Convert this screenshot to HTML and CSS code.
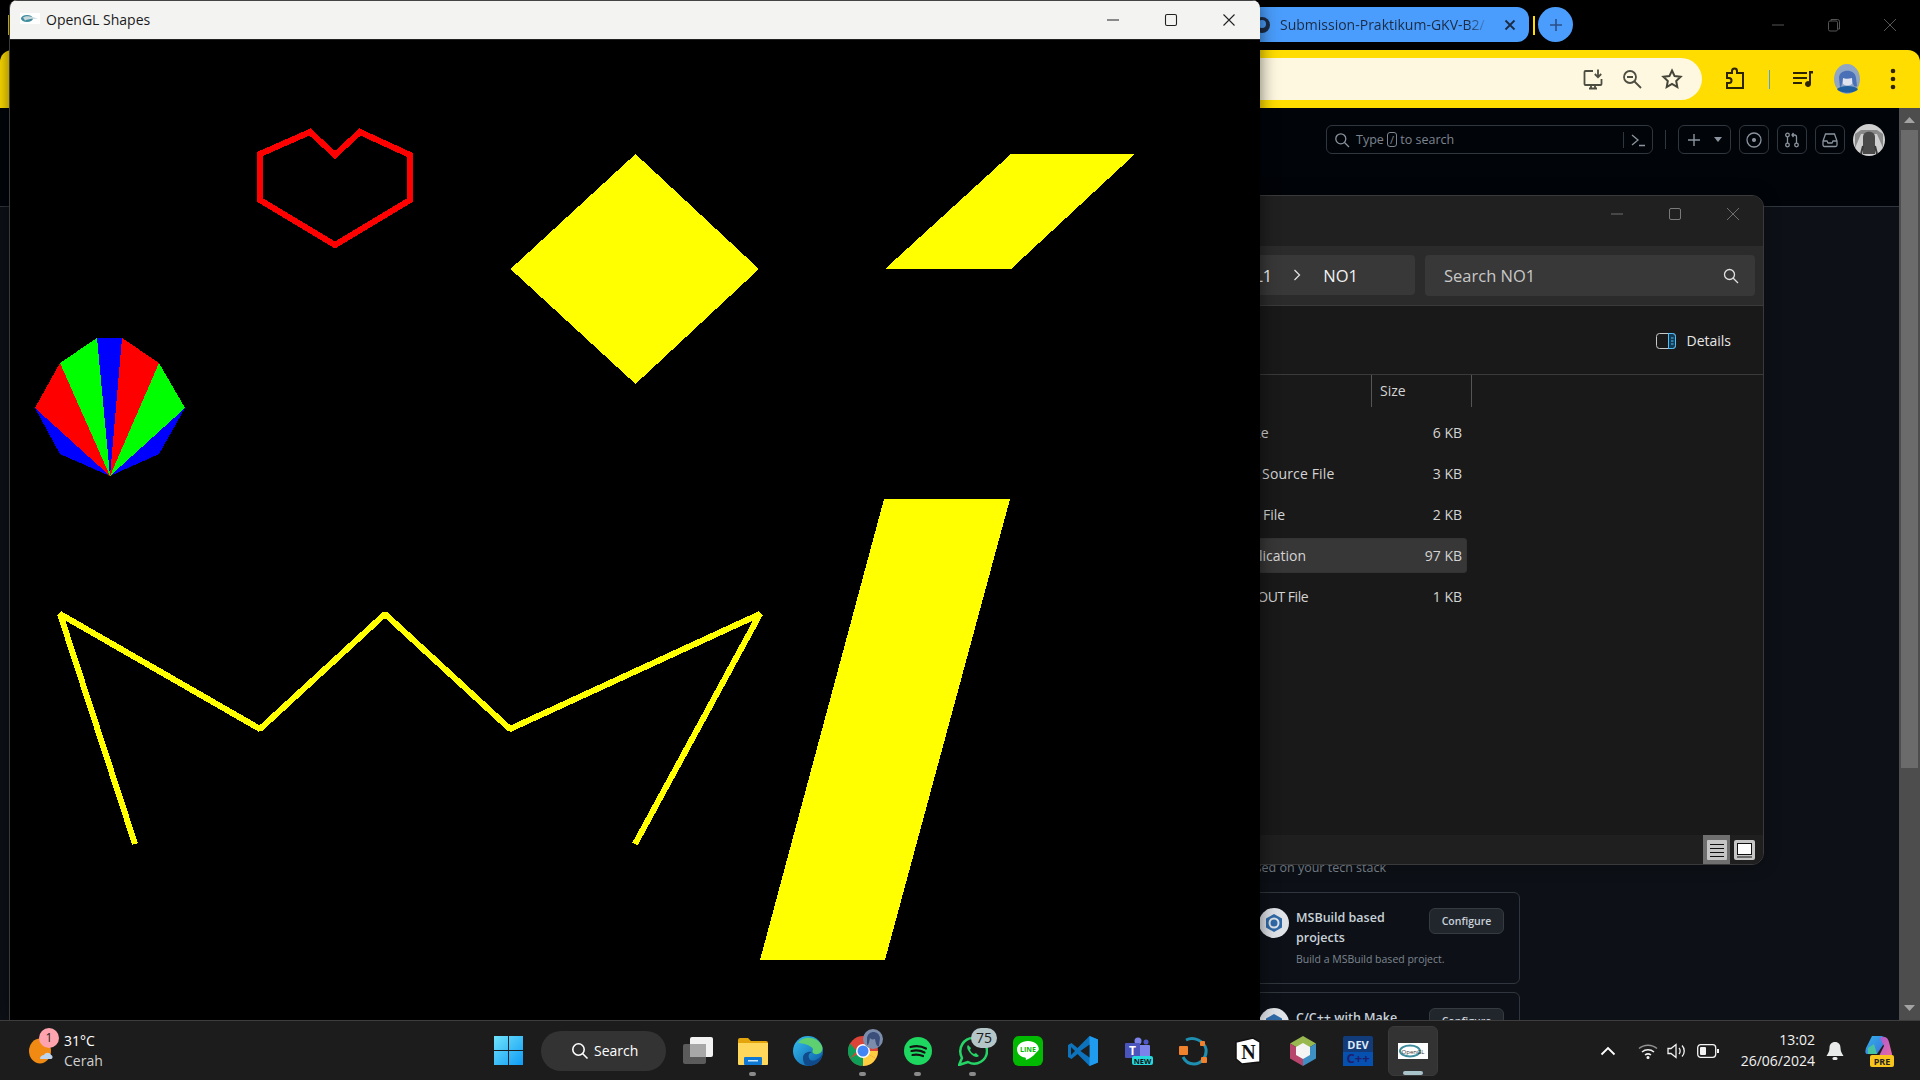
FILE: index.html
```html
<!DOCTYPE html>
<html lang="en">
<head>
    <meta charset="UTF-8">
    <title>OpenGL Shapes</title>
    <link rel="stylesheet" href="styles.css">
</head>
<body>
<div class="desktop">

    <!-- browser behind everything -->
    <div class="browser">
        <div class="tab-sep-left"></div>
        <div class="tabstrip">
            <div class="tab">
                <svg class="tab-icon" width="18" height="18" viewBox="0 0 18 18"><circle cx="9" cy="9" r="8" fill="#1c2b44"/><circle cx="9" cy="8" r="4" fill="#4a9dfc"/></svg>
                <span class="tab-title">Submission-Praktikum-GKV-B2/</span>
                <svg class="tab-close" width="12" height="12" viewBox="0 0 12 12"><path d="M1.5 1.5l9 9M10.5 1.5l-9 9" stroke="#1c2b44" stroke-width="1.8"/></svg>
            </div>
            <div class="tab-sep"></div>
            <div class="tab-new">
                <svg width="14" height="14" viewBox="0 0 14 14"><path d="M7 1v12M1 7h12" stroke="#2b4f86" stroke-width="1.6"/></svg>
            </div>
            <div class="caption-buttons">
                <div class="caption-btn"><svg width="14" height="14" viewBox="0 0 14 14"><path d="M1 7h12" stroke="#555" stroke-width="1"/></svg></div>
                <div class="caption-btn"><svg width="14" height="14" viewBox="0 0 14 14" fill="none" stroke="#555"><rect x="1.5" y="3" width="9" height="10" rx="1.5"/><path d="M4 3V1.5h6.5a2 2 0 0 1 2 2V11H11"/></svg></div>
                <div class="caption-btn"><svg width="14" height="14" viewBox="0 0 14 14"><path d="M1 1l12 12M13 1L1 13" stroke="#555"/></svg></div>
            </div>
        </div>

        <div class="toolbar">
            <div class="omnibox">
                <svg class="omni-install" width="24" height="24" viewBox="0 0 24 24" fill="none" stroke="#4d4d42" stroke-width="1.8"><path d="M11 4H3.5a1 1 0 0 0-1 1v12a1 1 0 0 0 1 1h15a1 1 0 0 0 1-1v-5"/><path d="M7 21.5h8M9 18v3M13 18v3"/><path d="M16 2.5V10M12.8 7l3.2 3.2L19.200 7"/></svg>
                <svg width="22" height="22" viewBox="0 0 22 22" fill="none" stroke="#4d4d42" stroke-width="1.8"><circle cx="9" cy="9" r="6"/><path d="M13.500 13.500L20 20M6 9h6"/></svg>
                <svg width="22" height="22" viewBox="0 0 22 22" fill="none" stroke="#45453a" stroke-width="2"><path d="M11 2.500l2.600 5.600 6 .7-4.400 4.200 1.100 6L11 16l-5.300 3 1.100-6-4.400-4.200 6-.7z"/></svg>
            </div>
            <svg class="tb-ext" width="24" height="24" viewBox="0 0 24 24" fill="none" stroke="#2d2400" stroke-width="2"><path d="M4 6h5V4a2.500 2.500 0 0 1 5 0v2h6v15H4v-5h2a2.500 2.500 0 0 0 0-5H4z"/></svg>
            <div class="tb-sep"></div>
            <svg class="tb-queue" width="24" height="24" viewBox="0 0 24 24" fill="#2d2400"><path d="M2 5h14v2H2zM2 10h14v2H2zM2 15h9v2H2z"/><path d="M18 4h4v2.500h-2V17a3 3 0 1 1-2-2.800z"/></svg>
            <svg class="tb-avatar" width="26" height="30" viewBox="0 0 26 30"><ellipse cx="13" cy="15" rx="13" ry="15" fill="#8fa6c4"/><path d="M9 12h9v8c-3 2-6 2-9 0z" fill="#dfe3ee"/><path d="M5 14c0-9 16-10 17 0l1 8c-3 2-4-1-5-8-3 1-7 1-9 0-1 4-1 9-3 9z" fill="#4a70b8"/><path d="M3 25c4-4 17-4 21 0-3 5-18 5-21 0z" fill="#1f5fa0"/></svg>
            <svg class="tb-kebab" width="16" height="24" viewBox="0 0 16 24" fill="#2d2400"><circle cx="8" cy="4" r="2.300"/><circle cx="8" cy="12" r="2.300"/><circle cx="8" cy="20" r="2.300"/></svg>
        </div>

        <div class="gh-page">
            <div class="gh-header">
                <div class="gh-search">
                    <svg width="16" height="16" viewBox="0 0 16 16" fill="none" stroke="#8b949e" stroke-width="1.300"><circle cx="6.800" cy="6.800" r="5"/><path d="M10.500 10.500L15 15"/></svg>
                    <span class="gh-search-text">Type <kbd class="gh-key">/</kbd> to search</span>
                    <span class="gh-search-sep"></span>
                    <svg width="16" height="16" viewBox="0 0 16 16" fill="none" stroke="#8b949e" stroke-width="1.300"><path d="M2 3l6 5-6 5M9 13.500h6"/></svg>
                </div>
                <div class="gh-sep"></div>
                <div class="gh-btn gh-btn-wide">
                    <svg width="14" height="14" viewBox="0 0 14 14"><path d="M7 1v12M1 7h12" stroke="#8b949e" stroke-width="1.400"/></svg>
                    <svg width="8" height="5" viewBox="0 0 8 5"><path d="M0 0h8L4 5z" fill="#8b949e"/></svg>
                </div>
                <div class="gh-btn"><svg width="16" height="16" viewBox="0 0 16 16" fill="none" stroke="#8b949e" stroke-width="1.300"><circle cx="8" cy="8" r="7"/><circle cx="8" cy="8" r="1.400" fill="#8b949e"/></svg></div>
                <div class="gh-btn"><svg width="16" height="16" viewBox="0 0 16 16" fill="none" stroke="#8b949e" stroke-width="1.300"><circle cx="3.500" cy="3" r="1.800"/><circle cx="3.500" cy="13" r="1.800"/><circle cx="12.500" cy="13" r="1.800"/><path d="M3.500 5v6M12.500 11V5a2 2 0 0 0-2-2H8M9.500 1L8 3l1.500 2"/></svg></div>
                <div class="gh-btn"><svg width="16" height="16" viewBox="0 0 16 16" fill="none" stroke="#8b949e" stroke-width="1.300"><path d="M3.500 2h9l2.500 7v4a1.500 1.500 0 0 1-1.500 1.500h-11A1.500 1.500 0 0 1 1 13V9z"/><path d="M1 9h4l1 2h4l1-2h4"/></svg></div>
                <svg class="gh-avatar" width="32" height="32" viewBox="0 0 32 32"><circle cx="16" cy="16" r="16" fill="#cfcfcf"/><path d="M2 10l6-4 16 0 6 4v14l-6-14H8L2 24z" fill="#8a8a8a"/><path d="M10 30V13c0-7 12-7 12 0v17z" fill="#4a4a4a"/><path d="M8 30l2-8M24 30l-2-8" stroke="#3a3a3a" stroke-width="2"/></svg>
            </div>

            <div class="gh-main">
                <div class="gh-hint">based on your tech stack</div>
                <div class="gh-card">
                    <svg class="gh-card-icon" width="30" height="30" viewBox="0 0 30 30"><circle cx="15" cy="15" r="15" fill="#dfe3e8"/><path d="M15 6l8 4.500v9L15 24l-8-4.500v-9z" fill="#2f6aa8"/><circle cx="15" cy="15" r="4.500" fill="none" stroke="#dfe3e8" stroke-width="2"/></svg>
                    <div class="gh-card-body">
                        <div class="gh-card-title">MSBuild based projects</div>
                        <div class="gh-card-desc">Build a MSBuild based project.</div>
                    </div>
                    <div class="gh-configure">Configure</div>
                </div>
                <div class="gh-card">
                    <svg class="gh-card-icon" width="30" height="30" viewBox="0 0 30 30"><circle cx="15" cy="15" r="15" fill="#dfe3e8"/><path d="M15 6l8 4.500v9L15 24l-8-4.500v-9z" fill="#2f6aa8"/></svg>
                    <div class="gh-card-body">
                        <div class="gh-card-title">C/C++ with Make</div>
                    </div>
                    <div class="gh-configure">Configure</div>
                </div>
            </div>
        </div>

        <div class="scrollbar">
            <svg width="21" height="22" viewBox="0 0 21 22"><path d="M5 15l5.500-6 5.500 6z" fill="#a3a3a3"/></svg>
            <div class="scroll-thumb"></div>
            <svg class="scroll-down" width="21" height="22" viewBox="0 0 21 22"><path d="M5 7l5.500 6L16 7z" fill="#a3a3a3"/></svg>
        </div>
    </div>

    <!-- file explorer window -->
    <div class="explorer">
        <div class="ex-title">
            <div class="ex-cap"><svg width="14" height="14" viewBox="0 0 14 14"><path d="M1 7h12" stroke="#6e6e6e"/></svg></div>
            <div class="ex-cap"><svg width="14" height="14" viewBox="0 0 14 14"><rect x="1.500" y="1.500" width="11" height="11" rx="1.500" fill="none" stroke="#7a7a7a"/></svg></div>
            <div class="ex-cap"><svg width="14" height="14" viewBox="0 0 14 14"><path d="M1 1l12 12M13 1L1 13" stroke="#6e6e6e"/></svg></div>
        </div>
        <div class="ex-nav">
            <div class="ex-address">
                <span class="ex-crumb">SOAL1</span>
                <svg class="ex-chevron" width="8" height="12" viewBox="0 0 8 12"><path d="M1.500 1l5 5-5 5" fill="none" stroke="#e0e0e0" stroke-width="1.300"/></svg>
                <span class="ex-crumb ex-crumb-last">NO1</span>
            </div>
            <div class="ex-search">
                <span>Search NO1</span>
                <svg width="16" height="16" viewBox="0 0 16 16" fill="none" stroke="#e0e0e0" stroke-width="1.300"><circle cx="6.500" cy="6.500" r="5"/><path d="M10 10l5 5"/></svg>
            </div>
        </div>
        <div class="ex-command">
            <svg width="20" height="16" viewBox="0 0 20 16"><rect x=".5" y=".5" width="19" height="15" rx="3" fill="none" stroke="#c9c9c9"/><path d="M12.500.5H16.500a3 3 0 0 1 3 3v9a3 3 0 0 1-3 3h-4z" fill="#163a52" stroke="#4cc2ff"/><path d="M15 5h2.500M15 8h2.500M15 11h2.500" stroke="#4cc2ff"/></svg>
            <span>Details</span>
        </div>
        <div class="ex-columns"><div class="ex-col-size">Size</div></div>
        <div class="ex-row"><span class="ex-type">Make</span><span class="ex-size">6 KB</span></div>
        <div class="ex-row"><span class="ex-type ex-type-wide">C++ Source File</span><span class="ex-size">3 KB</span></div>
        <div class="ex-row"><span class="ex-type">DEV File</span><span class="ex-size">2 KB</span></div>
        <div class="ex-row ex-row-selected"><span class="ex-type">Application</span><span class="ex-size">97 KB</span></div>
        <div class="ex-row"><span class="ex-type ex-type-tight">STDOUT File</span><span class="ex-size">1 KB</span></div>
        <div class="ex-status">
            <div class="ex-view ex-view-active"><svg width="20" height="20" viewBox="0 0 20 20"><rect width="20" height="20" rx="1" fill="#c6c6c6"/><path d="M3 4.500h14M3 8.500h14M3 12.500h14M3 16.500h14" stroke="#111"/></svg></div>
            <div class="ex-view"><svg width="21" height="20" viewBox="0 0 21 20"><rect width="21" height="20" rx="2" fill="#c6c6c6"/><rect x="3.500" y="3.500" width="14" height="11" fill="#fff" stroke="#111"/><path d="M3 17h15" stroke="#111"/></svg></div>
        </div>
    </div>

    <!-- the glut window -->
    <div class="gl-window">
        <div class="gl-title">
            <svg class="gl-logo" width="20" height="11" viewBox="0 0 20 11"><rect width="20" height="11" fill="#fff"/><ellipse cx="7" cy="5.500" rx="6" ry="3.500" fill="#3f8c9e"/><path d="M3 4.500c3-2 8-2 15 1.500-5-.5-10 0-13 1.500z" fill="#c9d8dc"/></svg>
            <span class="gl-name">OpenGL Shapes</span>
            <div class="gl-caps">
                <div class="gl-cap"><svg width="14" height="14" viewBox="0 0 14 14"><path d="M1 7h12" stroke="#222" stroke-width="1.100"/></svg></div>
                <div class="gl-cap"><svg width="14" height="14" viewBox="0 0 14 14"><rect x="1.500" y="1.500" width="11" height="11" rx="1.500" fill="none" stroke="#222" stroke-width="1.100"/></svg></div>
                <div class="gl-cap"><svg width="14" height="14" viewBox="0 0 14 14"><path d="M1.500 1.500l11 11M12.500 1.500l-11 11" stroke="#222" stroke-width="1.100"/></svg></div>
            </div>
        </div>
        <svg class="gl-canvas" width="1250" height="981" viewBox="10 39 1250 981" shape-rendering="crispEdges">
            <polygon points="260,153 310,131 335,154 360,131 410,154 410,199 335,244 260,199" fill="none" stroke="#f00" stroke-width="6" stroke-linejoin="miter"/>
            <polygon points="635.500,153 759,268 635.500,383 510.500,268" fill="#ff0"/>
            <polygon points="1011,153 1135,153 1011,268 885,268" fill="#ff0"/>
            <polygon points="884,498 1010,498 885,959 760,959" fill="#ff0"/>
            <polyline points="135,843 60,613 260,728 385,613 510,728 760,613 635,843" fill="none" stroke="#ff0" stroke-width="6" stroke-linejoin="bevel"/>
            <polygon points="110,475 60,453 35,407" fill="#00f"/>
            <polygon points="110,475 35,407 60,362" fill="#f00"/>
            <polygon points="110,475 60,362 97,337" fill="#0f0"/>
            <polygon points="110,475 97,337 122,337" fill="#00f"/>
            <polygon points="110,475 122,337 159,362" fill="#f00"/>
            <polygon points="110,475 159,362 185,407" fill="#0f0"/>
            <polygon points="110,475 185,407 159,453" fill="#00f"/>
        </svg>
    </div>

    <!-- taskbar -->
    <div class="taskbar">
        <div class="weather">
            <div class="weather-icon">
                <svg width="24" height="26" viewBox="0 0 24 26"><ellipse cx="11" cy="13" rx="11" ry="12.500" fill="#f08a12"/><path d="M11 21c0-3 2-4 4-4 1-3 6-3 7 0 2 0 2 4 0 4z" fill="#bcd4ee"/></svg>
                <span class="weather-badge">1</span>
            </div>
            <div class="weather-text">
                <div class="weather-temp">31°C</div>
                <div class="weather-desc">Cerah</div>
            </div>
        </div>

        <div class="slot slot-start">
            <svg width="29" height="29" viewBox="0 0 30 30"><defs><linearGradient id="win" x1="0" y1="0" x2="1" y2="1"><stop offset="0" stop-color="#6fe3fb"/><stop offset="1" stop-color="#0f9bf5"/></linearGradient></defs><path d="M0 0h14.500v14.500H0zM15.500 0H30v14.500H15.500zM0 15.500h14.500V30H0zM15.500 15.500H30V30H15.500z" fill="url(#win)"/></svg>
        </div>
        <div class="task-search">
            <svg width="18" height="18" viewBox="0 0 18 18" fill="none" stroke="#fff" stroke-width="1.600"><circle cx="7.500" cy="7.500" r="5.700"/><path d="M11.500 11.500l5 5"/></svg>
            <span>Search</span>
        </div>

        <div class="slots">
            <div class="slot"><svg width="30" height="30" viewBox="0 0 30 30"><rect x="0" y="8" width="23" height="20" rx="2" fill="#5b5b5b"/><rect x="7" y="1" width="23" height="20" rx="2" fill="#f2f2f2"/><rect x="7" y="8" width="16" height="13" fill="#a8a8a8"/></svg></div>

            <div class="slot slot-open"><svg width="30" height="28" viewBox="0 0 30 28"><path d="M0 3a2 2 0 0 1 2-2h8l3 3h15a2 2 0 0 1 2 2v4H0z" fill="#e3a40c"/><path d="M0 6h30v21a1 1 0 0 1-1 1H1a1 1 0 0 1-1-1z" fill="#ffd75a"/><rect x="6" y="20" width="18" height="8" rx="1" fill="#0f78d4"/><rect x="10" y="23" width="10" height="1.500" fill="#c8e6fb"/></svg></div>

            <div class="slot"><svg width="30" height="30" viewBox="0 0 30 30"><defs><linearGradient id="edge" x1="0" y1="0" x2="1" y2="1"><stop offset="0" stop-color="#35c1f1"/><stop offset="1" stop-color="#0c59a4"/></linearGradient></defs><circle cx="15" cy="15" r="15" fill="url(#edge)"/><path d="M5 7c5-8 20-7 24 3 2 6-3 9-7 8-4-1-2-4-2-5-2-4-11-6-15-6z" fill="#5fd06f"/><path d="M30 17c-1 8-7 13-14 13-5 0-6-5-6-8 0-5 5-7 9-6-3 1-4 3-3 6 1 4 9 4 14-5z" fill="#114a8b"/></svg></div>

            <div class="slot slot-open">
                <svg width="30" height="30" viewBox="0 0 30 30"><circle cx="15" cy="15" r="15" fill="#db4437"/><path d="M15 15L2 22.500A15 15 0 0 0 15 30z" fill="#0f9d58"/><path d="M2 22.500A15 15 0 0 1 2 7.500L9 15z" fill="#0f9d58"/><path d="M15 15l13 7.500A15 15 0 0 1 15 30z" fill="#ffcd40"/><path d="M15 15H30a15 15 0 0 1-2 7.500z" fill="#ffcd40"/><circle cx="15" cy="15" r="7" fill="#fff"/><circle cx="15" cy="15" r="5.500" fill="#4285f4"/></svg>
                <svg class="app-badge-pic" width="20" height="20" viewBox="0 0 20 20"><circle cx="10" cy="10" r="10" fill="#7c8dac"/><path d="M4 9c1-8 12-8 13 0l-1 8c-2 1-3-1-4-7-3 1-4 0-5-1-1 4-1 7-3 7z" fill="#3b4f7a"/></svg>
            </div>

            <div class="slot slot-open"><svg width="28" height="28" viewBox="0 0 28 28"><circle cx="14" cy="14" r="14" fill="#1ed760"/><path d="M6.500 10c5-1.500 11-1 15.500 1.500M7.500 14c4.500-1 9-.6 13 1.500M8.500 18c3.500-.8 7-.5 10.500 1" fill="none" stroke="#121212" stroke-width="2.200" stroke-linecap="round"/></svg></div>

            <div class="slot slot-open">
                <svg width="30" height="30" viewBox="0 0 30 30"><path d="M4 22C-1 12 6 2 15 2c8 0 14 6 14 13 0 9-10 16-19 11L1 29z" fill="none" stroke="#25d366" stroke-width="2.500" stroke-linejoin="round"/><path d="M10 9c-2 2 0 6 3 9s6 4 8 2l-3-3-2 1c-2-1-3-2-4-4l1-2z" fill="#25d366"/></svg>
                <span class="app-badge">75</span>
            </div>

            <div class="slot"><svg width="30" height="30" viewBox="0 0 30 30"><rect width="30" height="30" rx="6" fill="#00b900"/><path d="M15 5C8.500 5 4 9 4 13.500c0 4.500 4 7.500 8 8 1 .2 1 1 .8 2.500 3-1 8-4 10-7 2-2 3-3 3-3.500C26 9 21.500 5 15 5z" fill="#fff"/><text x="15" y="16" class="ico-line">LINE</text></svg></div>

            <div class="slot"><svg width="30" height="30" viewBox="0 0 30 30"><path d="M21.500 0L9.500 12 3.500 7 0 9v12l3.500 2 6-5 12 12 8.500-3.500V3.500z" fill="#0d73bd"/><path d="M21.500 0L30 3.500v23L21.500 30z" fill="#1f9cf0"/><path d="M21.500 8.500L12.500 15l9 6.500z" fill="#1e1e1e"/><path d="M3 11l4 4-4 4z" fill="#1e1e1e"/></svg></div>

            <div class="slot"><svg width="30" height="30" viewBox="0 0 30 30"><circle cx="15" cy="5" r="3.500" fill="#7b83eb"/><circle cx="23" cy="6" r="2.500" fill="#5059c9"/><rect x="12" y="9" width="15" height="13" rx="1" fill="#7b83eb"/><rect x="2" y="7" width="15" height="15" rx="1" fill="#4b53bc"/><text x="9.500" y="19" class="ico-teams">T</text><rect x="9" y="20" width="21" height="9" rx="2" fill="#24d8dc"/><text x="19.500" y="27.500" class="ico-new">NEW</text></svg></div>

            <div class="slot"><svg width="30" height="30" viewBox="0 0 30 30"><path d="M8 4c8-4 18 1 20 9 1 8-5 15-12 15-5 0-9-3-11-7" fill="none" stroke="#1e8fb0" stroke-width="3"/><rect x="1" y="10" width="9" height="9" rx="1" fill="#f0822d"/><rect x="22" y="5" width="5" height="5" rx="1" fill="#f0822d"/><rect x="23" y="21" width="6" height="6" rx="1" fill="#f0822d"/></svg></div>

            <div class="slot"><svg width="26" height="28" viewBox="0 0 26 28"><path d="M1 5l17-4 7 4v20L7 27l-6-5z" fill="#fff" stroke="#111" stroke-width="1.500"/><text x="13.500" y="21.500" class="ico-notion">N</text></svg></div>

            <div class="slot"><svg width="28" height="30" viewBox="0 0 28 30"><path d="M14 0l13 7.500L14 15 1 7.500z" fill="#9ab850"/><path d="M1 7.500L14 15v15L1 22.500z" fill="#b8456b"/><path d="M27 7.500L14 15v15l13-7.500z" fill="#3d8fc4"/><path d="M14 7l7 4v8l-7 4-7-4v-8z" fill="#f4f4f4"/></svg></div>

            <div class="slot"><svg width="30" height="30" viewBox="0 0 30 30"><rect width="30" height="30" rx="2" fill="#123b7a"/><rect y="16" width="30" height="14" fill="#0650b0"/><text x="15" y="13" class="ico-dev">DEV</text><text x="15" y="27" class="ico-cpp">C++</text></svg></div>

            <div class="slot slot-active"><svg width="30" height="16" viewBox="0 0 30 16"><rect width="30" height="16" fill="#fff"/><ellipse cx="12" cy="8" rx="10" ry="5.500" fill="none" stroke="#3f8c9e" stroke-width="2"/><text x="15" y="11" class="ico-gl">OpenGL</text></svg></div>
        </div>

        <div class="tray">
            <div class="tray-icon"><svg width="16" height="10" viewBox="0 0 16 10"><path d="M1.500 8.500L8 2l6.500 6.500" fill="none" stroke="#fff" stroke-width="1.800"/></svg></div>
            <div class="tray-icon tray-wifi"><svg width="20" height="16" viewBox="0 0 20 16" fill="none" stroke="#f2f2f2" stroke-width="1.500"><path d="M1 5.500c5-4.500 13-4.500 18 0" opacity=".55"/><path d="M4 9c3.500-3 8.500-3 12 0"/><path d="M7 12c2-1.500 4-1.500 6 0"/><circle cx="10" cy="14.500" r=".8" fill="#f2f2f2"/></svg></div>
            <div class="tray-icon"><svg width="20" height="18" viewBox="0 0 20 18" fill="none" stroke="#f2f2f2" stroke-width="1.300"><path d="M1 6.500h3l5-4v13l-5-4H1z"/><path d="M12 6c1.500 1.500 1.500 4.500 0 6M15 3.500c3 3 3 8 0 11"/></svg></div>
            <div class="tray-icon tray-batt"><svg width="22" height="14" viewBox="0 0 22 14"><rect x=".7" y=".7" width="18" height="12.600" rx="3" fill="none" stroke="#f2f2f2" stroke-width="1.300"/><rect x="3" y="3" width="6" height="8" rx="1" fill="#f2f2f2"/><rect x="20" y="5" width="2" height="4" fill="#f2f2f2"/></svg></div>
            <div class="clock">
                <div>13:02</div>
                <div>26/06/2024</div>
            </div>
            <div class="tray-bell"><svg width="18" height="20" viewBox="0 0 18 20"><path d="M9 1c-3.500 0-5.500 2.500-5.500 6 0 4-2 6-3 8h17c-1-2-3-4-3-8 0-3.500-2-6-5.500-6z" fill="#e8ebe9"/><rect x="6.500" y="16" width="5" height="3" rx="1.500" fill="#e8ebe9"/></svg></div>
            <div class="tray-copilot"><svg width="30" height="34" viewBox="0 0 30 34"><defs><linearGradient id="cop1" x1="0" y1="0" x2="1" y2="1"><stop offset="0" stop-color="#2fb3e8"/><stop offset="1" stop-color="#3d6ee0"/></linearGradient><linearGradient id="cop2" x1="0" y1="0" x2="1" y2="1"><stop offset="0" stop-color="#a55ad6"/><stop offset="1" stop-color="#f06aa0"/></linearGradient></defs><path d="M8 2h9c3 0 3 2 4 6l-8 12H4C1 20 1 18 2 14z" fill="url(#cop1)"/><path d="M16 4c5-3 8 0 9 4l3 12c0 3-3 4-6 4H14l6-12z" fill="url(#cop2)"/><path d="M4 14l6-4 3 10H4z" fill="#49c2a0"/><rect x="6" y="21" width="24" height="12" rx="2" fill="#f7c51e"/><text x="18" y="31" class="ico-pre">PRE</text></svg></div>
        </div>
    </div>
</div>
</body>
</html>
```

FILE: styles.css
```css
* {
    box-sizing: border-box;
}
html, body {
    margin: 0;
    padding: 0;
}
body {
    font-family: "Open Sans", "Noto Sans", sans-serif;
    background: #000;
    overflow: hidden;
}
svg {
    display: block;
    flex-shrink: 0;
}
.desktop {
    position: relative;
    width: 1920px;
    height: 1080px;
    overflow: hidden;
}

/* browser */
.browser {
    position: absolute;
    left: 0;
    top: 0;
    width: 1920px;
    height: 1020px;
    background: #000;
    display: flex;
    flex-direction: column;
}
.tab-sep-left {
    position: absolute;
    left: 8px;
    top: 15px;
    width: 2px;
    height: 20px;
    background: #ffdd00;
}
.tabstrip {
    height: 50px;
    padding-left: 1240px;
    display: flex;
    align-items: flex-start;
}
.tab {
    width: 289px;
    height: 35px;
    margin-top: 7px;
    padding: 0 13px 0 13px;
    background: #4a9dfc;
    border-radius: 12px;
    display: flex;
    align-items: center;
    color: #1c2b44;
    font-size: 14px;
}
.tab-title {
    margin-left: 9px;
    width: 210px;
    overflow: hidden;
    white-space: nowrap;
    -webkit-mask-image: linear-gradient(90deg, #000 90%, transparent);
    mask-image: linear-gradient(90deg, #000 90%, transparent);
}
.tab-close {
    margin-left: 15px;
}
.tab-sep {
    width: 2px;
    height: 19px;
    margin: 16px 3px 0 4px;
    background: #ffdd00;
}
.tab-new {
    width: 35px;
    height: 35px;
    margin-top: 7px;
    border-radius: 50%;
    background: #4a9dfc;
    display: flex;
    align-items: center;
    justify-content: center;
}
.caption-buttons {
    margin-left: auto;
    margin-right: 2px;
    margin-top: 7px;
    display: flex;
}
.caption-btn {
    width: 56px;
    height: 36px;
    display: flex;
    align-items: center;
    justify-content: center;
}

.toolbar {
    height: 58px;
    background: #ffdd00;
    border-radius: 12px 12px 0 0;
    display: flex;
    align-items: center;
}
.omnibox {
    width: 1622px;
    height: 42px;
    margin-left: 80px;
    padding-right: 19px;
    background: #fef8e0;
    border-radius: 21px;
    display: flex;
    align-items: center;
    justify-content: flex-end;
    gap: 18px;
}
.omni-install {
    margin-right: -3px;
}
.tb-ext {
    margin-left: 21px;
}
.tb-sep {
    width: 1px;
    height: 19px;
    margin-left: 22px;
    background: #4a9dfc;
}
.tb-queue {
    margin-left: 21px;
}
.tb-avatar {
    margin-left: 19px;
}
.tb-kebab {
    margin-left: 25px;
}

.gh-page {
    flex: 1;
    background: #0d1117;
    margin-right: 21px;
    overflow: hidden;
}
.gh-header {
    height: 99px;
    padding: 17px 14px 0 0;
    background: #010409;
    border-bottom: 1px solid #30363d;
    display: flex;
    justify-content: flex-end;
    align-items: flex-start;
    gap: 8px;
}
.gh-search {
    width: 327px;
    height: 29px;
    padding: 0 6px 0 7px;
    border: 1px solid #30363d;
    border-radius: 6px;
    display: flex;
    align-items: center;
    color: #7d8590;
    font-size: 12.500px;
}
.gh-search-text {
    margin-left: 6px;
    flex: 1;
}
.gh-key {
    display: inline-block;
    width: 10px;
    height: 15px;
    border: 1px solid #7d8590;
    border-radius: 3px;
    font-family: inherit;
    font-size: 11px;
    line-height: 13px;
    text-align: center;
}
.gh-search-sep {
    width: 1px;
    height: 16px;
    margin-right: 6px;
    background: #30363d;
}
.gh-sep {
    width: 1px;
    height: 19px;
    margin: 5px 4px 0 4px;
    background: #30363d;
}
.gh-btn {
    width: 30px;
    height: 29px;
    border: 1px solid #30363d;
    border-radius: 6px;
    display: flex;
    align-items: center;
    justify-content: center;
}
.gh-btn-wide {
    width: 53px;
    gap: 13px;
}
.gh-avatar {
    margin-top: -1px;
}
.gh-main {
    width: 278px;
    margin-left: 1242px;
    padding-top: 651px;
}
.gh-hint {
    width: 144px;
    height: 34px;
    display: flex;
    justify-content: flex-end;
    white-space: nowrap;
    color: #7d8590;
    font-size: 12.500px;
    line-height: 19px;
}
.gh-card {
    height: 92px;
    margin-bottom: 8px;
    padding: 16px 15px 16px 16px;
    border: 1px solid #30363d;
    border-radius: 6px;
    display: flex;
    align-items: flex-start;
}
.gh-card-icon {
    margin: -1px 7px 0 0;
}
.gh-card-body {
    width: 125px;
}
.gh-card-title {
    margin-top: -1px;
    color: #c9d1d9;
    font-size: 12.500px;
    font-weight: 600;
    line-height: 20px;
    white-space: normal;
}
.gh-card-desc {
    margin-top: 3px;
    width: 170px;
    color: #7d8590;
    font-size: 10.500px;
    line-height: 16px;
    white-space: nowrap;
}
.gh-configure {
    width: 75px;
    height: 26px;
    margin-left: auto;
    margin-top: -1px;
    background: #21262d;
    border: 1px solid #363b42;
    border-radius: 6px;
    color: #c9d1d9;
    font-size: 10.500px;
    font-weight: 600;
    line-height: 24px;
    text-align: center;
}

.scrollbar {
    position: absolute;
    left: 1899px;
    top: 108px;
    width: 21px;
    height: 912px;
    background: #4d4d4d;
    display: flex;
    flex-direction: column;
}
.scroll-thumb {
    width: 17px;
    height: 638px;
    margin-left: 2px;
    background: #6b6b6b;
}
.scroll-down {
    margin-top: auto;
}

/* explorer */
.explorer {
    position: absolute;
    left: 1100px;
    top: 195px;
    width: 664px;
    height: 670px;
    background: #191919;
    border: 1px solid #3a3a3a;
    border-radius: 8px 12px 12px 8px;
    box-shadow: 0 0 16px rgba(0, 0, 0, 0.35);
    display: flex;
    flex-direction: column;
    color: #e6e6e6;
    font-size: 14px;
    overflow: hidden;
}
.ex-title {
    height: 50px;
    padding-right: 1px;
    background: #202020;
    display: flex;
    justify-content: flex-end;
}
.ex-cap {
    width: 58px;
    height: 36px;
    display: flex;
    align-items: center;
    justify-content: center;
}
.ex-nav {
    height: 60px;
    padding: 9px 8px 9px 0;
    background: #2b2b2b;
    border-bottom: 1px solid #3a3a3a;
    display: flex;
    gap: 10px;
}
.ex-address {
    flex: 1;
    height: 40px;
    padding-right: 57px;
    background: #383838;
    border-radius: 4px;
    display: flex;
    align-items: center;
    justify-content: flex-end;
    font-size: 16.500px;
}
.ex-crumb {
    color: #f2f2f2;
}
.ex-chevron {
    margin: 0 22px 0 21px;
}
.ex-search {
    width: 330px;
    height: 41px;
    padding: 0 16px 0 19px;
    background: #383838;
    border-radius: 4px;
    display: flex;
    align-items: center;
    justify-content: space-between;
    color: #c8c8c8;
    font-size: 16.500px;
}
.ex-command {
    height: 68px;
    padding: 1px 32px 0 0;
    display: flex;
    align-items: center;
    justify-content: flex-end;
    gap: 10px;
    font-size: 14px;
}
.ex-columns {
    height: 33px;
    padding-left: 270px;
    border-top: 1px solid #3a3a3a;
}
.ex-col-size {
    width: 101px;
    height: 32px;
    padding-left: 8px;
    border-left: 1px solid #555;
    border-right: 1px solid #555;
    line-height: 32px;
    color: #d4d4d4;
}
.ex-row {
    width: 366px;
    height: 35px;
    margin-bottom: 6px;
    padding: 0 4px 0 131px;
    border: 1px solid transparent;
    border-radius: 3px;
    display: flex;
    align-items: center;
    justify-content: space-between;
    color: #d4d4d4;
}
.ex-columns + .ex-row {
    margin-top: 8px;
}
.ex-type-wide {
    letter-spacing: 0.15px;
}
.ex-type-tight {
    letter-spacing: -0.45px;
}
.ex-row-selected {
    background: #373737;
    border-color: #333;
}
.ex-status {
    margin-top: auto;
    height: 29px;
    padding-right: 8px;
    background: #1f1f1f;
    display: flex;
    justify-content: flex-end;
    gap: 4px;
}
.ex-view {
    width: 21px;
    display: flex;
    align-items: center;
    justify-content: center;
}
.ex-view-active {
    width: 27px;
    background: #6f6f6f;
}

/* opengl window */
.gl-window {
    position: absolute;
    left: 9px;
    top: 0;
    width: 1251px;
    height: 1020px;
    border-radius: 8px 8px 0 0;
    background: #000;
    border-left: 1px solid #3a3a3a;
    box-shadow: 0 0 18px rgba(0, 0, 0, 0.55);
    overflow: hidden;
}
.gl-title {
    height: 40px;
    padding: 0 2px 0 10px;
    background: #f3f3f2;
    border-top: 1px solid #444;
    border-bottom: 1px solid #222;
    display: flex;
    align-items: center;
}
.gl-logo {
    margin-top: -4px;
}
.gl-name {
    margin: -2px 0 0 6px;
    color: #1a1a1a;
    font-size: 14px;
}
.gl-caps {
    margin-left: auto;
    display: flex;
}
.gl-cap {
    width: 58px;
    height: 37px;
    display: flex;
    align-items: center;
    justify-content: center;
}
.gl-canvas {
    background: #000;
}

/* taskbar */
.taskbar {
    position: absolute;
    left: 0;
    top: 1020px;
    width: 1920px;
    height: 60px;
    background: #1c1c1c;
    border-top: 1px solid #3d3d3d;
    display: flex;
    align-items: center;
    color: #fff;
    font-size: 14px;
}
.weather {
    width: 481px;
    padding-left: 29px;
    display: flex;
    align-items: center;
}
.weather-icon {
    position: relative;
    width: 24px;
    height: 26px;
}
.weather-badge {
    position: absolute;
    left: 10px;
    top: -10px;
    width: 20px;
    height: 20px;
    border-radius: 50%;
    background: #ffa4ae;
    color: #1c1c1c;
    font-size: 12px;
    line-height: 20px;
    text-align: center;
}
.weather-text {
    margin-left: 11px;
    font-size: 14px;
    line-height: 20px;
}
.weather-desc {
    color: #d0d0d0;
}
.slot {
    position: relative;
    width: 55px;
    height: 50px;
    display: flex;
    align-items: center;
    justify-content: center;
}
.task-search {
    width: 125px;
    height: 40px;
    margin-left: 5px;
    padding-left: 30px;
    background: #333;
    border-radius: 20px;
    display: flex;
    align-items: center;
    gap: 5px;
    font-size: 14px;
}
.slots {
    display: flex;
    margin-left: 4px;
}
.slot-open::after,
.slot-active::after {
    content: "";
    position: absolute;
    left: 24px;
    bottom: 0;
    width: 7px;
    height: 4px;
    border-radius: 2px;
    background: #8a8a8a;
}
.slot-active {
    width: 50px;
    margin-left: 3px;
    background: #333;
    border-radius: 6px;
    border: 1px solid #3a3a3a;
}
.slot-active::after {
    left: 14px;
    bottom: 0;
    width: 20px;
    background: #a9c3ca;
}
.app-badge {
    position: absolute;
    left: 26px;
    top: 2px;
    width: 26px;
    height: 20px;
    border-radius: 10px;
    background: #b5c6c9;
    color: #1c1c1c;
    font-size: 14px;
    line-height: 20px;
    text-align: center;
}
.app-badge-pic {
    position: absolute;
    left: 28px;
    top: 3px;
}
.ico-line {
    fill: #00b900;
    font-size: 7px;
    font-weight: 700;
    text-anchor: middle;
}
.ico-teams {
    fill: #fff;
    font-size: 12px;
    font-weight: 700;
    text-anchor: middle;
}
.ico-new {
    fill: #111;
    font-size: 7.500px;
    font-weight: 700;
    text-anchor: middle;
}
.ico-notion {
    fill: #111;
    font-family: "Liberation Serif", serif;
    font-size: 20px;
    font-weight: 700;
    text-anchor: middle;
}
.ico-dev {
    fill: #dfe8f5;
    font-size: 11px;
    font-weight: 700;
    text-anchor: middle;
}
.ico-cpp {
    fill: #1e1e6e;
    font-size: 13px;
    font-weight: 700;
    text-anchor: middle;
}
.ico-gl {
    fill: #333;
    font-size: 6px;
    text-anchor: middle;
}
.ico-pre {
    fill: #222;
    font-size: 9px;
    font-weight: 700;
    text-anchor: middle;
}
.tray {
    margin-left: 158px;
    display: flex;
    align-items: center;
}
.tray-icon {
    width: 24px;
    height: 24px;
    display: flex;
    align-items: center;
    justify-content: center;
}
.tray-wifi {
    margin: 0 5px 0 16px;
}
.tray-batt {
    margin-left: 7px;
}
.clock {
    width: 95px;
    margin-top: -2px;
    text-align: right;
    font-size: 14px;
    line-height: 21px;
    color: #f2f2f2;
}
.tray-bell {
    margin-left: 11px;
}
.tray-copilot {
    margin-left: 20px;
}
```
